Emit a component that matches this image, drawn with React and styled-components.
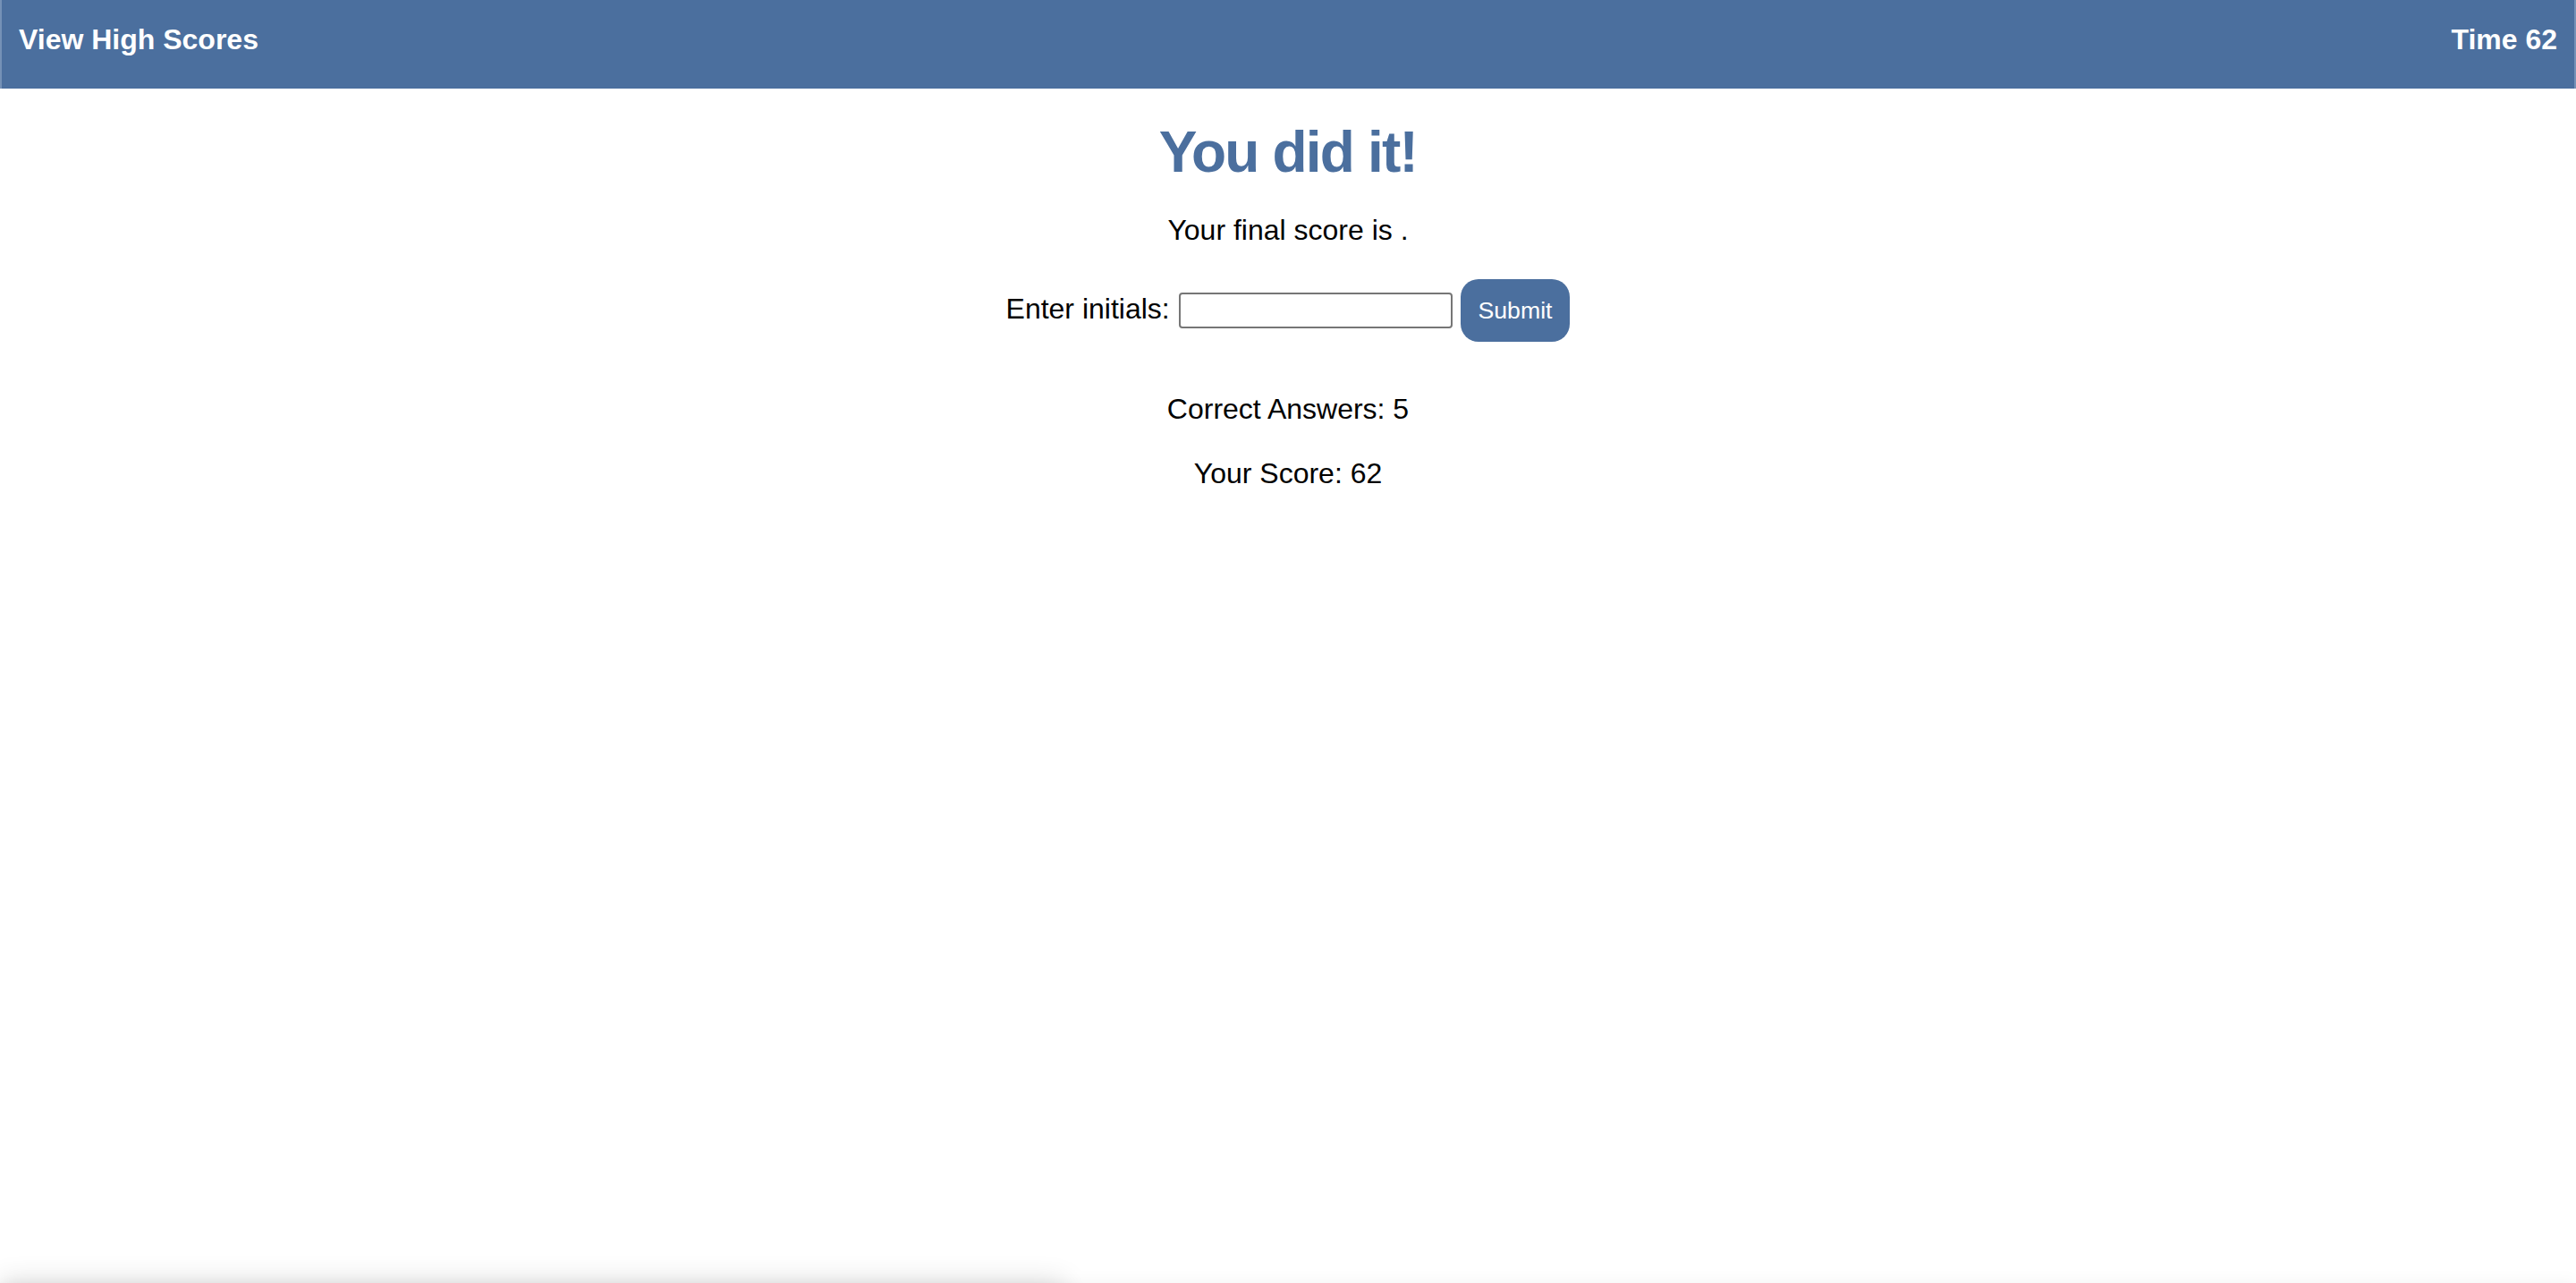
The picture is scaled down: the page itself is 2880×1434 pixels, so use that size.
import React from "react";
import styled, { createGlobalStyle } from "styled-components";

const GlobalStyle = createGlobalStyle`
  html, body {
    margin: 0;
    padding: 0;
    background: #ffffff;
    overflow: hidden;
  }
  body {
    font-family: "Liberation Sans", Helvetica, Arial, sans-serif;
    font-size: 32px;
    color: #000000;
  }
`;

const Page = styled.div`
  min-height: 1434px;
  display: flex;
  flex-direction: column;
`;

const Header = styled.header`
  box-sizing: border-box;
  height: 99px;
  display: flex;
  justify-content: space-between;
  align-items: flex-start;
  padding: 26px 19px 0 19px;
  background: #4b6f9e;
  border-left: 2px solid #7591b6;
  border-right: 2px solid #7591b6;
  color: #ffffff;
  font-size: 32px;
  font-weight: bold;
  line-height: normal;
`;

const HeaderLink = styled.a`
  color: inherit;
  text-decoration: none;
  cursor: pointer;
`;

const Timer = styled.span`
  color: inherit;
`;

const Main = styled.main`
  display: flex;
  flex-direction: column;
  align-items: center;
  text-align: center;
`;

const Title = styled.h1`
  margin: 34px 0 0 0;
  font-size: 64px;
  font-weight: bold;
  letter-spacing: -1.8px;
  line-height: normal;
  color: #4b6f9e;
`;

const Line = styled.p`
  margin: ${(p) => p.$top}px 0 0 0;
  font-size: 32px;
  line-height: normal;
`;

const Form = styled.form`
  margin: 36px 0 0 0;
  font-size: 32px;
  line-height: normal;
  white-space: nowrap;
`;

const Label = styled.label`
  font-size: 32px;
`;

const Input = styled.input`
  box-sizing: border-box;
  width: 306px;
  height: 40px;
  margin: 0 0 0 1px;
  padding: 0 4px;
  border: 2px solid #767676;
  border-radius: 4px;
  font-family: "Liberation Sans", Helvetica, Arial, sans-serif;
  font-size: 26.67px;
  background: #ffffff;
  vertical-align: baseline;
`;

const Button = styled.button`
  box-sizing: border-box;
  height: 70px;
  padding: 0 20px;
  border: none;
  border-radius: 20px;
  background: #4b6f9e;
  color: #ffffff;
  font-family: "Liberation Sans", Helvetica, Arial, sans-serif;
  font-size: 26.67px;
  line-height: normal;
  cursor: pointer;
`;

const ScoresPanel = styled.div`
  position: fixed;
  left: 0;
  top: 1434px;
  width: 1190px;
  height: 300px;
  background: #ffffff;
  box-shadow: 0 0 30px rgba(0, 0, 0, 0.16);
`;

const FaintEdge = styled.div`
  position: fixed;
  left: 0;
  right: 0;
  top: 1434px;
  height: 100px;
  box-shadow: 0 0 18px rgba(0, 0, 0, 0.05);
`;

export default function App() {
  return (
    <>
      <GlobalStyle />
      <Page>
        <Header>
          <HeaderLink>View High Scores</HeaderLink>
          <Timer>Time 62</Timer>
        </Header>
        <Main>
          <Title>You did it!</Title>
          <Line $top={32}>Your final score is .</Line>
          <Form onSubmit={(e) => e.preventDefault()}>
            <Label htmlFor="initials">Enter initials:</Label>{" "}
            <Input id="initials" type="text" />{" "}
            <Button type="submit">Submit</Button>
          </Form>
          <Line $top={57}>Correct Answers: 5</Line>
          <Line $top={35}>Your Score: 62</Line>
        </Main>
      </Page>
      <FaintEdge />
      <ScoresPanel />
    </>
  );
}
